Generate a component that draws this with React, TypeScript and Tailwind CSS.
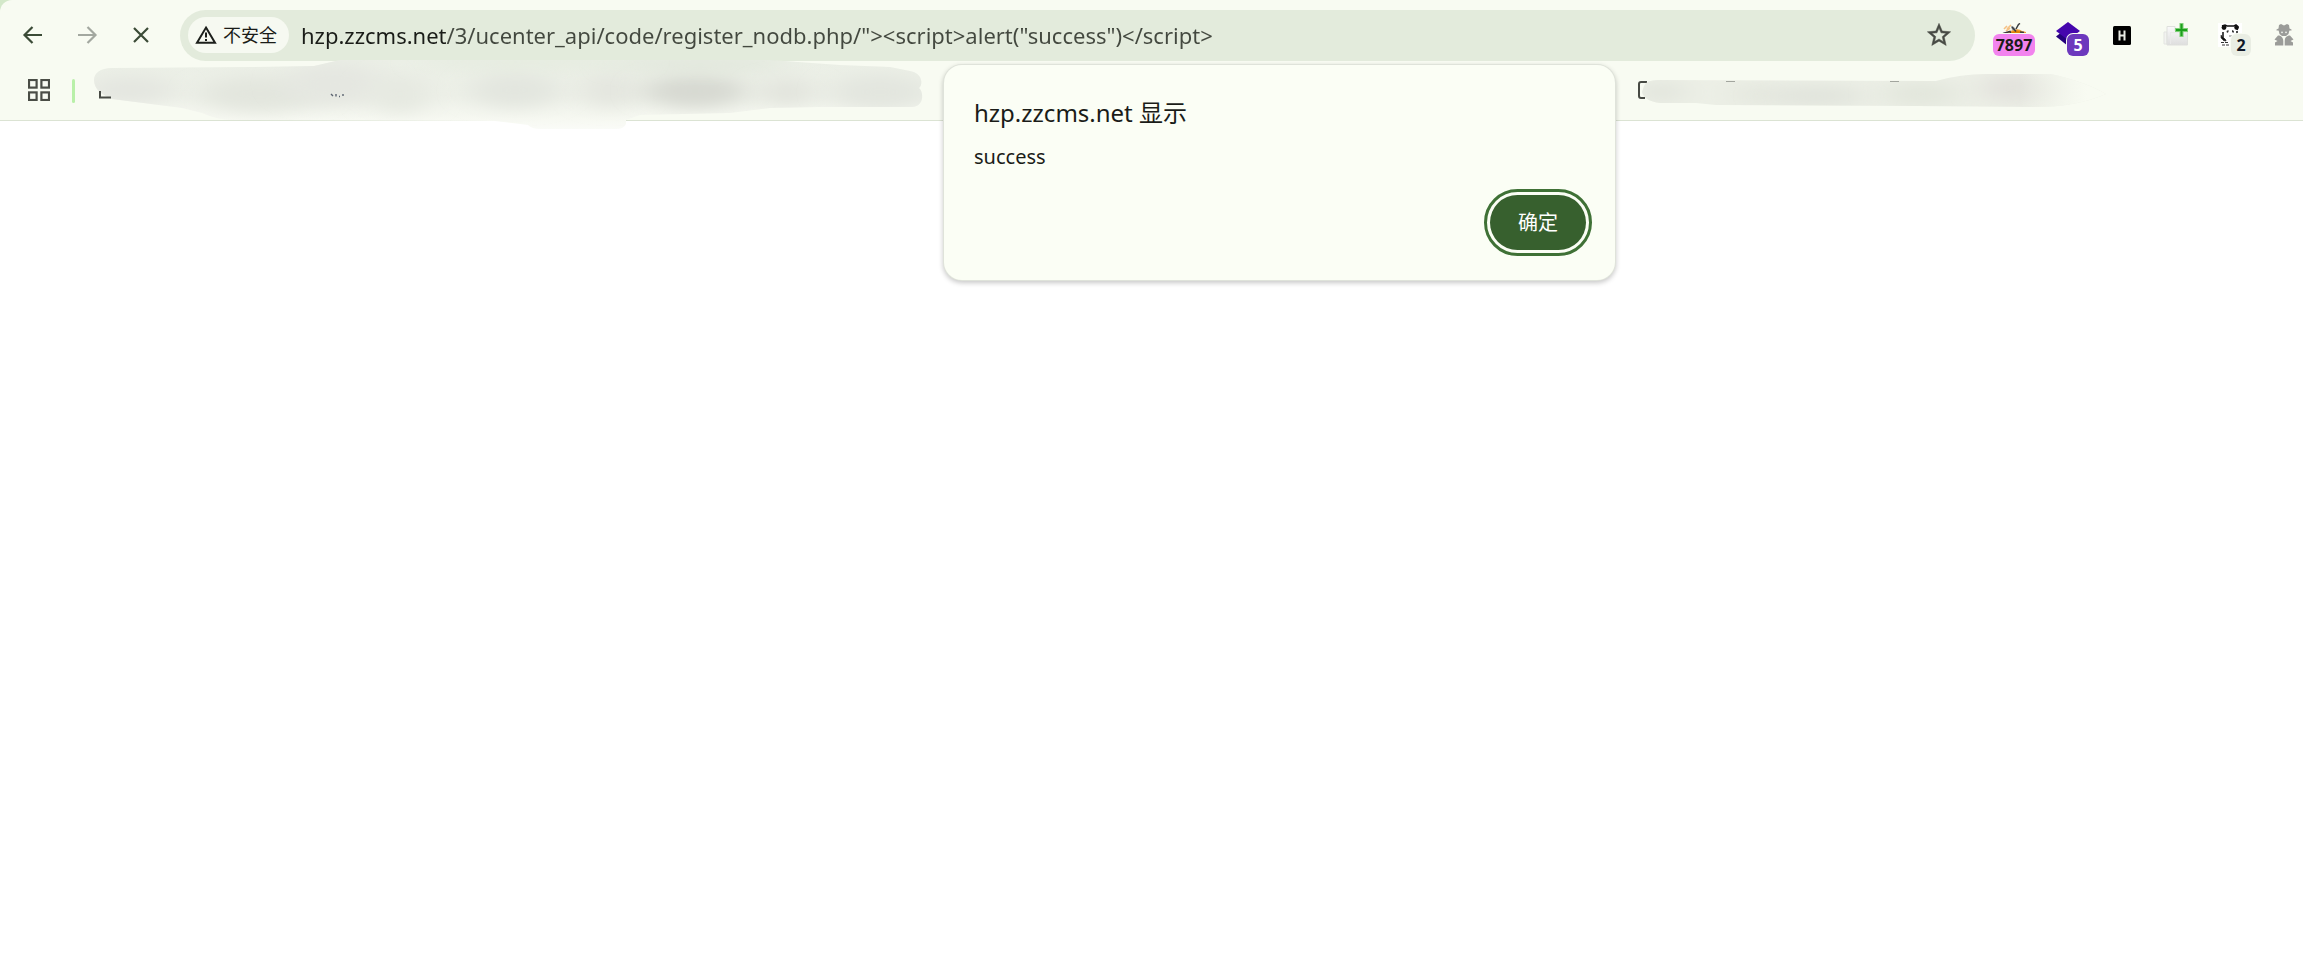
import React from "react";

const iconButton = "flex w-[54px] shrink-0 items-center justify-center";

function ArrowIcon({ forward = false }: { forward?: boolean }) {
  return (
    <svg width="24" height="24" viewBox="0 0 24 24" fill="none" stroke={forward ? "#a3a8a0" : "#3b4b37"} strokeWidth="2.2">
      {forward ? <path d="M3 12H20M12.5 4L20.5 12L12.5 20" /> : <path d="M21 12H4M11.5 4L3.5 12L11.5 20" />}
    </svg>
  );
}

function CloseIcon() {
  return (
    <svg width="24" height="24" viewBox="0 0 24 24" fill="none" stroke="#3b4b37" strokeWidth="2.2">
      <path d="M5 5L19 19M19 5L5 19" />
    </svg>
  );
}

function WarningIcon() {
  return (
    <svg width="22" height="20" viewBox="0 0 22 20" fill="none" stroke="#1c1f1b" strokeWidth="2">
      <path d="M11 2.6L20 17.8H2Z" />
      <path d="M11 7.5V12.5M11 14V16" />
    </svg>
  );
}

function StarIcon() {
  return (
    <svg width="28" height="28" viewBox="0 0 24 24" fill="#474a44" stroke="#474a44" strokeWidth="0.4">
      <path d="M22 9.24l-7.19-.62L12 2 9.19 8.63 2 9.24l5.46 4.73L5.82 21 12 17.27 18.18 21l-1.63-7.03L22 9.24zM12 15.4l-3.76 2.27 1-4.28-3.32-2.88 4.38-.38L12 6.1l1.71 4.04 4.38.38-3.32 2.88 1 4.28L12 15.4z" />
    </svg>
  );
}

function AppsIcon() {
  return (
    <svg width="22" height="22" viewBox="0 0 22 22" fill="none" stroke="#4a4d46" strokeWidth="2.2">
      <rect x="1" y="1" width="7.6" height="7.6" />
      <rect x="13.4" y="1" width="7.6" height="7.6" />
      <rect x="1" y="13.4" width="7.6" height="7.6" />
      <rect x="13.4" y="13.4" width="7.6" height="7.6" />
    </svg>
  );
}

function BeeIcon() {
  return (
    <svg width="26" height="24" viewBox="0 0 26 24">
      <path d="M0 12Q3 9 7 9L12 7Q18 5 21 8L25 9V13H0Z" fill="#ee9a35" />
      <path d="M11 9Q16 6 20 9L21 12H10Z" fill="#e08306" />
      <path d="M3 6L6 3M6 6L10 2M5 8L9 5" stroke="#f5c184" strokeWidth="1.6" />
      <path d="M10 3Q14 3 15 8L11 7Z" fill="#9aa0a5" />
      <path d="M11 4L15 8.500M15 6L17.500 1.500L19 0.500M19 9L23 9.500M2 10.500L9 8.500L10 11" fill="none" stroke="#3a3c3f" strokeWidth="1.500" />
    </svg>
  );
}

function LayersIcon() {
  return (
    <svg width="26" height="26" viewBox="0 0 26 26">
      <path d="M13 5L25 14.500L13 24L1 14.500Z" fill="#25007c" />
      <path d="M13 0L25 9L13 18L1 9Z" fill="#4506ad" />
    </svg>
  );
}

function HIcon() {
  return (
    <svg width="18" height="19" viewBox="0 0 18 19">
      <rect width="18" height="19" rx="1.500" fill="#000" />
      <path d="M6.500 4.500V14.500M11.500 4.500V14.500M6.500 9.500H11.500" stroke="#e9ece4" strokeWidth="2" />
    </svg>
  );
}

function AddPagesIcon() {
  return (
    <svg width="26" height="24" viewBox="0 0 26 24">
      <defs>
        <linearGradient id="page" x1="0" y1="0" x2="0" y2="1">
          <stop offset="0" stopColor="#fafafa" />
          <stop offset="1" stopColor="#dedede" />
        </linearGradient>
      </defs>
      <path d="M1 9H4V21H1Z" fill="#f2f3f0" stroke="#e3e4e1" />
      <path d="M4 3.500H12V8H24.500V22H4Z" fill="url(#page)" stroke="#dfe0dd" />
      <path d="M7.500 9V21M8 9.500H24" fill="none" stroke="#e9e9e9" />
      <path d="M16.500 0H20.500V5H25V9H20.500V14H16.500V9H12V5H16.500Z" fill="#7fd077" />
      <path d="M18.500 1V13M13 7H24" stroke="#1c9f1c" strokeWidth="2" />
    </svg>
  );
}

function PandaIcon() {
  return (
    <svg width="24" height="24" viewBox="0 0 24 24">
      <rect width="24" height="24" fill="#fff" />
      <path d="M4 3L7 2L9 3H16L18 2L20 4L19 7M5 9V15L8 18M19 8V14L17 17" fill="none" stroke="#111" strokeWidth="1.500" />
      <circle cx="6" cy="4.500" r="2.400" fill="#111" />
      <circle cx="18.500" cy="4.500" r="2.200" fill="#111" />
      <path d="M8.500 8L10.500 7L10.500 9L9 10ZM14 7L16 8L15.500 10L14 9Z" fill="#333" />
      <path d="M3 12L8 17L6 18L3 15ZM11 13H14" fill="#111" stroke="#444" strokeWidth="0.700" />
      <path d="M3 19.500H11M4 22H12" stroke="#333" strokeWidth="1" strokeDasharray="3 1" />
    </svg>
  );
}

function AgentsIcon() {
  return (
    <svg width="20" height="22" viewBox="0 0 20 22" fill="#9b9c99">
      <path d="M5 1L7 0L10 1.500L13 0L15 1L15.500 4.500L17.500 5.500V6.500H2.500V5.500L4.500 4.500Z" />
      <path d="M4.500 6H15.500L14.500 10L12 12H8L5.500 10Z" />
      <circle cx="8" cy="8.300" r="0.900" fill="#f1f3ec" />
      <circle cx="12" cy="8.300" r="0.900" fill="#f1f3ec" />
      <path d="M4 11.500C7 11.500 9.300 13.500 9.300 17V21.500H1V18.500L3.500 17L0.500 15.500Z" />
      <path d="M16 11.500C13 11.500 10.700 13.500 10.700 17V21.500H19V18.500L16.500 17L19.500 15.500Z" />
    </svg>
  );
}

function Extension({ label, badge, badgeClass, children }: { label: string; badge?: string; badgeClass?: string; children: React.ReactNode }) {
  return (
    <button type="button" aria-label={label} className="relative flex h-full w-[54px] shrink-0 items-center justify-center">
      {children}
      {badge && (
        <span className={`absolute top-[33px] flex h-[22px] items-center justify-center rounded-md font-['Noto_Sans'] text-base leading-none font-bold ring-1 ring-[#f8fbf2] ${badgeClass}`}>
          {badge}
        </span>
      )}
    </button>
  );
}

function LeftSmudge() {
  const spots = [
    [40, 30, 45, 14, "#e4e6e0"],
    [170, 34, 60, 18, "#e3e6de"],
    [245, 24, 50, 22, "#e5e7e1"],
    [310, 34, 30, 20, "#e6e9e1"],
    [425, 30, 45, 18, "#e3e6df"],
    [520, 30, 28, 18, "#e4e6df"],
    [605, 31, 52, 17, "#d7d9d2"],
    [610, 4, 90, 8, "#e1e7dc"],
    [697, 32, 28, 14, "#e2e4dd"],
    [790, 32, 50, 18, "#e3e6df"],
    [440, 2, 110, 6, "#e4ebde"],
  ] as const;
  return (
    <svg className="pointer-events-none absolute top-[60px] left-[90px]" width="840" height="72" viewBox="0 0 840 72" aria-hidden="true">
      <defs>
        <clipPath id="left-shape">
          <path d="M4 20C4 13 10 8 22 8L160 7L224 6L250 0H680L750 5L800 7L820 11C833 13 833 25 829 28C834 32 834 47 822 47H730L680 48L640 53L550 55L536 60V64Q534 69 526 69H450Q442 69 438 65L405 61L140 60Q125 59 112 53L92 48L22 39C12 35 4 29 4 20Z" />
        </clipPath>
        <linearGradient id="left-fill" x1="0" y1="0" x2="0" y2="1">
          <stop offset="0" stopColor="#ebefe6" />
          <stop offset="0.500" stopColor="#edf0e8" />
          <stop offset="0.800" stopColor="#f6f8f1" />
          <stop offset="1" stopColor="#fbfcf9" />
        </linearGradient>
        <filter id="soft" x="-50%" y="-100%" width="200%" height="300%">
          <feGaussianBlur stdDeviation="15 8" />
        </filter>
      </defs>
      <g clipPath="url(#left-shape)">
        <rect width="840" height="72" fill="url(#left-fill)" />
        {spots.map(([x, y, rx, ry, fill]) => (
          <ellipse key={x} cx={x} cy={y} rx={rx} ry={ry} fill={fill} filter="url(#soft)" />
        ))}
      </g>
      <path d="M10 31V37.500H21" fill="none" stroke="#474a44" strokeWidth="2" />
      <path d="M241 34L243 36M246 34V36.500M249 36.500H250M253 34V36" stroke="#5b6470" strokeWidth="1.400" />
    </svg>
  );
}

function RightSmudge() {
  const spots = [
    [25, 22, 24, 10, "#e1e4dc"],
    [120, 24, 26, 10, "#e4e7de"],
    [180, 26, 50, 10, "#e0e3db"],
    [285, 24, 40, 12, "#e2e6dc"],
    [375, 18, 30, 14, "#e2e1dc"],
    [405, 20, 26, 10, "#e4e5de"],
  ] as const;
  return (
    <svg className="pointer-events-none absolute top-[70px] left-[1636px]" width="480" height="40" viewBox="0 0 480 40" aria-hidden="true">
      <defs>
        <clipPath id="right-shape">
          <path d="M8 16Q10 10 22 10L300 11Q325 4 350 4H415Q450 12 470 24Q440 37 400 37L280 36L80 35L60 33H24Q8 31 6 22Z" />
        </clipPath>
        <linearGradient id="right-fade" x1="0" y1="0" x2="1" y2="0">
          <stop offset="0.800" stopColor="#f8fbf2" stopOpacity="0" />
          <stop offset="0.940" stopColor="#f8fbf2" />
        </linearGradient>
      </defs>
      <path d="M11 12H5Q3 12 3 14V26Q3 28 5 28H9" fill="none" stroke="#474a44" strokeWidth="2" />
      <g clipPath="url(#right-shape)">
        <rect width="480" height="40" fill="#ecefe6" />
        {spots.map(([x, y, rx, ry, fill]) => (
          <ellipse key={x} cx={x} cy={y} rx={rx} ry={ry} fill={fill} filter="url(#soft)" />
        ))}
        <rect width="480" height="40" fill="url(#right-fade)" />
      </g>
      <path d="M90 11.500H99M254 11.500H263" stroke="#a2a59e" />
    </svg>
  );
}

export default function App() {
  return (
    <div className="relative min-h-screen overflow-hidden bg-white font-['Noto_Sans','Noto_Sans_CJK_SC',sans-serif] text-[#1a1c18]">
      <div className="bg-[#d3e8c9]">
        <header className="rounded-tl-xl border-b border-[#dbe3d3] bg-[#f8fbf2]">
          <div className="flex h-[69px] items-center pt-px pl-1.5">
            <button type="button" aria-label="后退" className={iconButton}><ArrowIcon /></button>
            <button type="button" aria-label="前进" disabled className={iconButton}><ArrowIcon forward /></button>
            <button type="button" aria-label="停止" className={iconButton}><CloseIcon /></button>
            <div className="ml-3 flex h-[51px] flex-1 items-center rounded-full bg-[#e3ebdc] pr-[22px] pl-2">
              <button type="button" className="flex h-9 w-[101px] items-center gap-1.5 rounded-full bg-[#f6f9f1] pl-[7px] text-lg leading-6 whitespace-nowrap">
                <WarningIcon />
                不安全
              </button>
              <input
                aria-label="地址"
                spellCheck={false}
                defaultValue={'hzp.zzcms.net/3/ucenter_api/code/register_nodb.php/"><script>alert("success")</script>'}
                className="ml-3 h-8 min-w-0 flex-1 bg-[linear-gradient(to_right,#1a1c18_145px,#43483f_145px)] bg-clip-text text-[22px] text-transparent caret-[#1a1c18] outline-none"
              />
              <button type="button" aria-label="加入书签"><StarIcon /></button>
            </div>
            <div className="ml-3 flex h-[69px] w-[316px] shrink-0 overflow-hidden">
              <Extension label="扩展 7897" badge="7897" badgeClass="w-[42px] bg-[#f283ee] text-[#1a1c18]"><BeeIcon /></Extension>
              <Extension label="扩展 5" badge="5" badgeClass="right-1.5 w-[22px] bg-[#6c38bd] text-white"><LayersIcon /></Extension>
              <Extension label="扩展 H"><HIcon /></Extension>
              <Extension label="添加页面"><AddPagesIcon /></Extension>
              <Extension label="扩展 2" badge="2" badgeClass="right-1.5 w-5 bg-[#e9ede3] text-[#111827]"><PandaIcon /></Extension>
              <Extension label="隐私扩展"><AgentsIcon /></Extension>
            </div>
          </div>
          <nav aria-label="书签栏" className="flex h-[51px] items-start pt-2.5 pl-7">
            <button type="button" aria-label="应用"><AppsIcon /></button>
            <span className="ml-[22px] h-6 w-[3px] rounded-full bg-[#b9f0a9]" />
          </nav>
        </header>
      </div>
      <LeftSmudge />
      <RightSmudge />
      <section
        role="dialog"
        aria-labelledby="dialog-title"
        className="absolute top-[65px] left-[944px] flex w-[671px] flex-col rounded-[18px] bg-[#fbfef5] pt-[30px] pr-[29px] pb-[30px] pl-[30px] shadow-[0_0_0_1px_#dfe3da,0_2px_5px_1px_#00000038]"
      >
        <h1 id="dialog-title" className="text-2xl leading-9">hzp.zzcms.net 显示</h1>
        <p className="mt-2.5 text-xl leading-8">success</p>
        <button
          type="button"
          className="mt-[22px] h-[55px] w-24 self-end rounded-full bg-[#37602e] text-xl text-white outline-3 outline-offset-3 outline-[#3f7136]"
        >
          确定
        </button>
      </section>
    </div>
  );
}
